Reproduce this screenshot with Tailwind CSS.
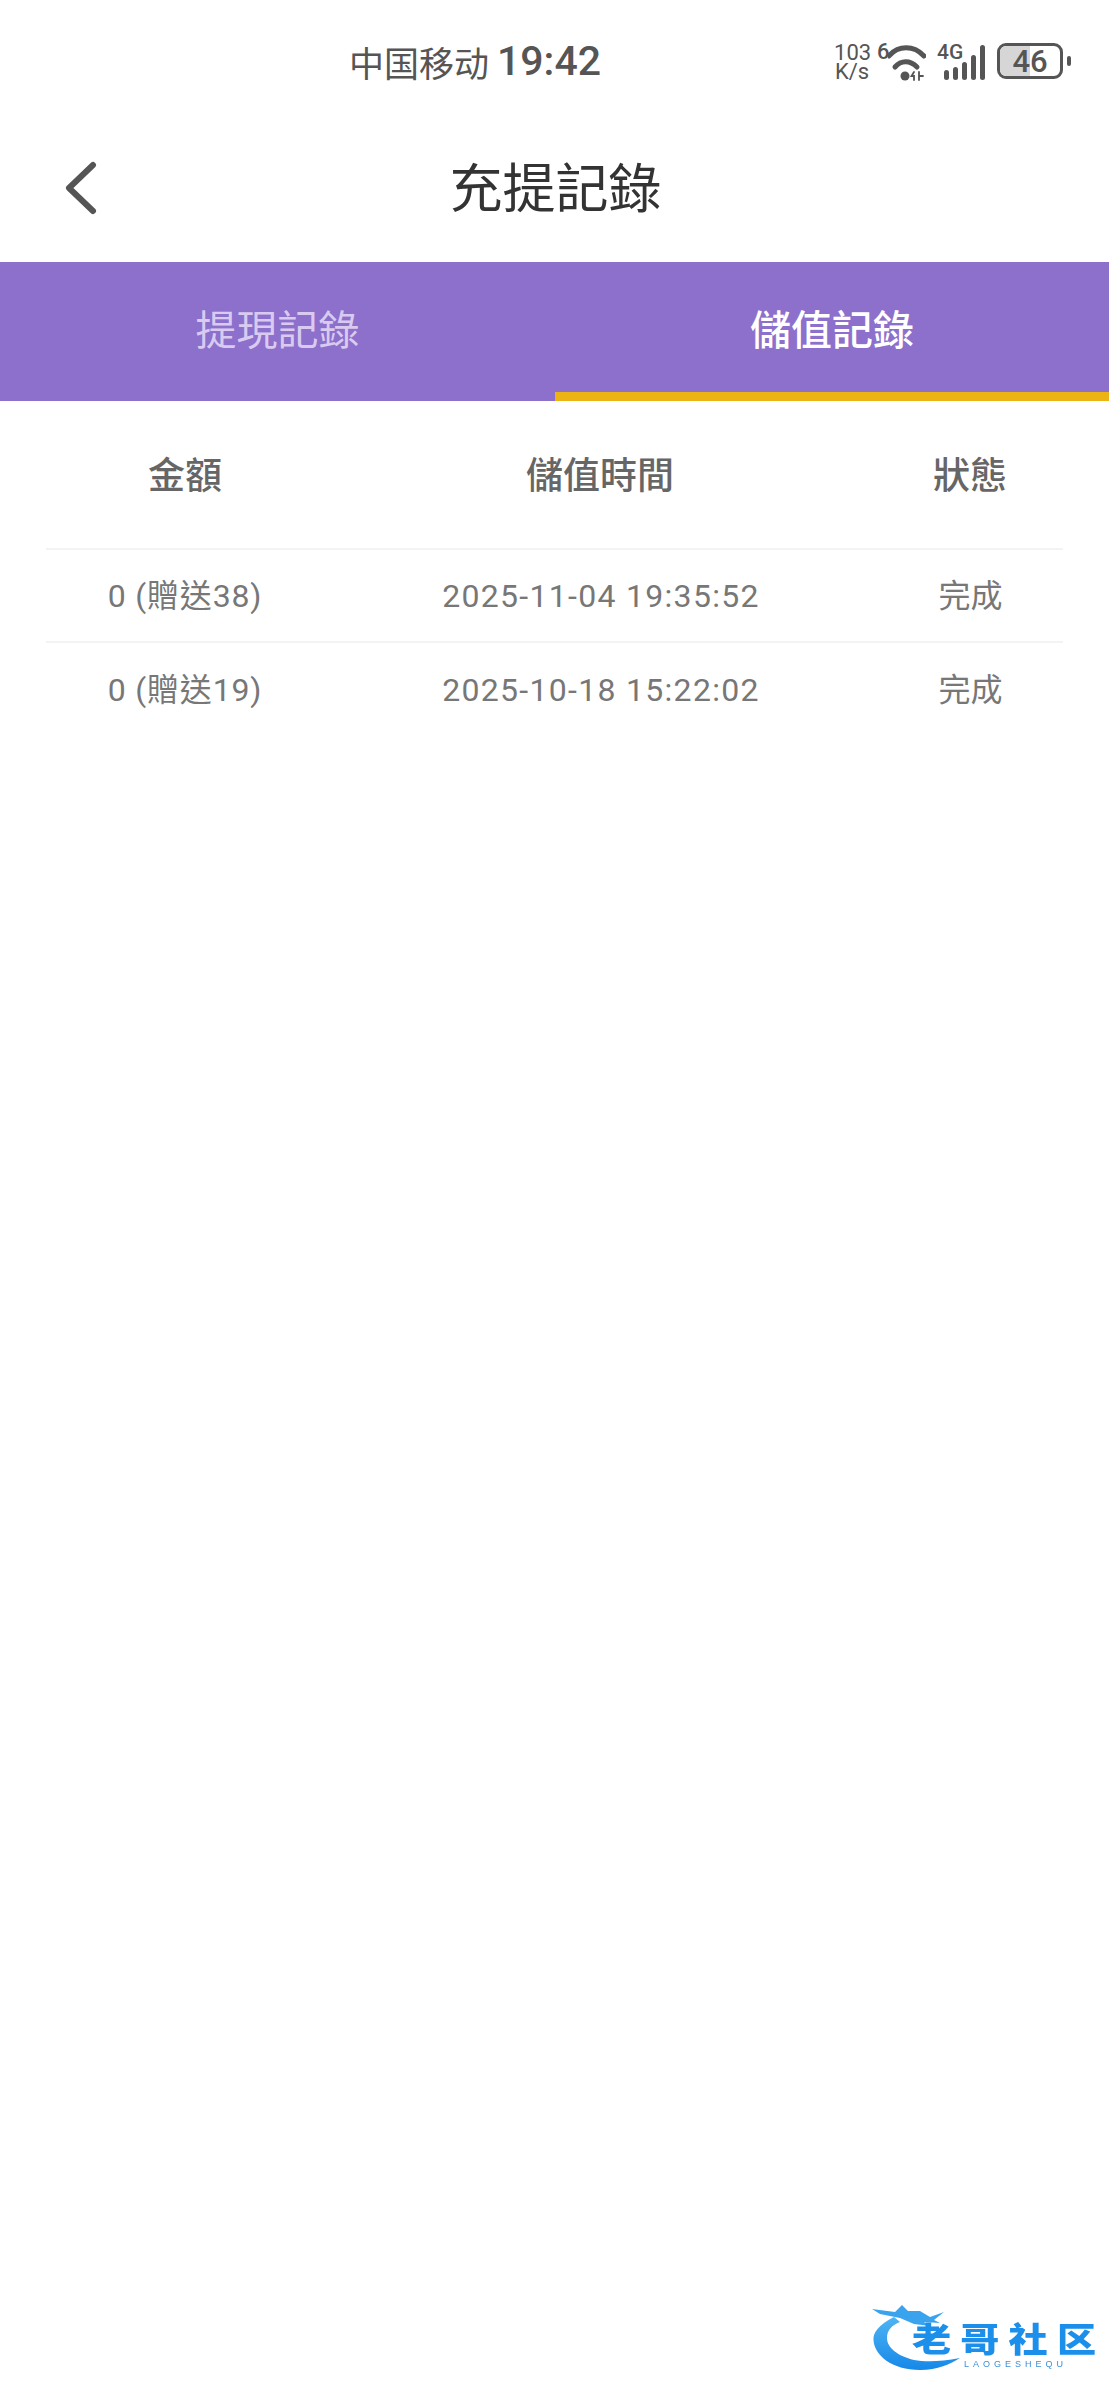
<!DOCTYPE html>
<html lang="zh-Hant">
<head>
  <meta charset="UTF-8" />
  <meta name="viewport" content="width=device-width, initial-scale=1.0" />
  <title>充提記錄</title>
  <script src="https://cdn.jsdelivr.net/npm/@tailwindcss/browser@4"></script>
</head>
<body class="bg-white font-['Noto_Sans_CJK_TC','Noto_Sans',sans-serif]">
  <div class="relative h-[2400px] w-[1109px] overflow-hidden">
    <!-- Status bar -->
    <div class="flex h-[110px] items-start pt-[43px] text-[#555]">
      <div class="ml-[349px] flex h-[36px] items-center gap-[8px]">
        <span class="font-['Noto_Sans_CJK_SC',sans-serif] text-[35px] leading-none">中国移动</span>
        <span class="font-['Roboto',sans-serif] text-[41px] font-medium leading-none">19:42</span>
      </div>
      <div class="ml-[233px] flex items-start">
        <div class="w-[36px] text-center font-['Roboto',sans-serif] text-[22px] leading-[19px]">103<br />K/s</div>
        <span class="ml-[7px] w-[12px] font-['Roboto',sans-serif] text-[22px] font-medium leading-[18px]">6</span>
        <svg class="-ml-px" width="38" height="38" viewBox="13 0 38 38" fill="none" stroke="#555" stroke-linecap="round">
          <path d="M14 13C23 2 39 2 49 13" stroke-width="5" />
          <path d="M20 24C26 17 35 17 42 24" stroke-width="5" />
          <circle cx="30" cy="33" r="4.500" fill="#555" stroke="none" />
          <path d="M39 29L36.500 33H39V37M44 29V37M44 33H48" stroke-width="1.800" />
        </svg>
        <span class="ml-[11px] w-[26px] font-['Roboto',sans-serif] text-[21px] font-medium leading-[19px]">4G</span>
        <svg class="-ml-[21px]" width="46" height="38" viewBox="6 0 46 38" fill="#555">
          <rect x="8" y="27" width="5" height="10" rx="2.500" />
          <rect x="17" y="24" width="5" height="13" rx="2.500" />
          <rect x="26" y="19" width="5" height="18" rx="2.500" />
          <rect x="35" y="12" width="5" height="25" rx="2.500" />
          <rect x="44" y="2" width="5" height="35" rx="2.500" />
        </svg>
        <div class="relative ml-[9px] flex h-[36px] w-[66px] items-center justify-center overflow-hidden rounded-[9px] border-[3px] border-[#555]">
          <div class="absolute inset-y-0 left-0 w-[30px] bg-[#d6d6d6]"></div>
          <span class="relative font-['Roboto',sans-serif] text-[31px] font-medium leading-none">46</span>
        </div>
        <div class="ml-[4px] mt-[13px] h-[10px] w-[4px] rounded-full bg-[#555]"></div>
      </div>
    </div>

    <!-- Title -->
    <div class="relative flex h-[152px] items-center justify-center pb-[2px] pl-[2px]">
      <svg class="absolute left-[64px] top-[51px]" width="33" height="54" viewBox="0 0 33 54" fill="none" stroke="#555" stroke-width="6" stroke-linecap="round" stroke-linejoin="round">
        <path d="M29 4L5 27L29 50" />
      </svg>
      <h1 class="text-[53px] font-normal leading-none text-[#333]">充提記錄</h1>
    </div>

    <!-- Tabs -->
    <div class="grid h-[139px] grid-cols-[555px_554px] bg-[#8d6fcc]">
      <div class="flex items-center justify-center pb-[9px] text-[41px] leading-none text-[#d9cbf0]">提現記錄</div>
      <div class="flex items-center justify-center rounded-t-[4px] border-b-[9px] border-[#ebb314] pt-[1px] text-[41px] font-medium leading-none text-white">儲值記錄</div>
    </div>

    <!-- Records -->
    <div class="mx-[46px]">
      <div class="grid h-[149px] grid-cols-[278px_552px_186px] items-center border-b-2 border-[#f3f3f3] pb-[3px] text-center text-[37px] font-medium leading-none text-[#666]">
        <div>金額</div>
        <div>儲值時間</div>
        <div class="pl-[2px]">狀態</div>
      </div>
      <div class="grid h-[93px] grid-cols-[278px_552px_186px] items-center border-b-2 border-[#f3f3f3] text-center font-['Roboto','Noto_Sans_CJK_SC',sans-serif] text-[32px] leading-none text-[#777]">
        <div class="tracking-[0.8px]">0 (贈送38)</div>
        <div class="pl-[2px] tracking-[1.3px]">2025-11-04 19:35:52</div>
        <div class="pl-[3px]">完成</div>
      </div>
      <div class="grid h-[93px] grid-cols-[278px_552px_186px] items-center text-center font-['Roboto','Noto_Sans_CJK_SC',sans-serif] text-[32px] leading-none text-[#777]">
        <div class="tracking-[0.8px]">0 (贈送19)</div>
        <div class="pl-[2px] tracking-[1.3px]">2025-10-18 15:22:02</div>
        <div class="pl-[3px]">完成</div>
      </div>
    </div>

    <!-- Watermark -->
    <div class="absolute left-[870px] top-[2300px] h-[100px] w-[239px] blur-[0.6px]">
      <svg class="absolute left-0 top-0" width="100" height="80" viewBox="0 0 100 80">
        <defs>
          <linearGradient id="dragon" x1="0" y1="0" x2="0" y2="1">
            <stop offset="0" stop-color="#4fb4f2" />
            <stop offset="1" stop-color="#1688e8" />
          </linearGradient>
        </defs>
        <path d="M24 17C8 25 3 33 3.500 40C4 55 22 70 50 70C68 70 80 64 90 58C70 62 55 62 44 60C28 56 17 48 17 38C17 30 22 25 30 22Z" fill="url(#dragon)" />
        <path d="M2 9L25 12L32 5L38 11L50 11L60 17L74 12L64 20L70 23L54 22L60 26L44 24L30 18L10 14Z" fill="#3aa3ee" />
      </svg>
      <div class="absolute left-[42px] top-[17px] origin-left scale-x-115 whitespace-nowrap font-['Noto_Sans_CJK_SC',sans-serif] text-[34px] font-black leading-[42px] tracking-[8px] text-[#1b8fea]">老哥社区</div>
      <div class="absolute left-[94px] top-[60px] whitespace-nowrap font-['Liberation_Sans',sans-serif] text-[9px] leading-none tracking-[4px] text-[#3b8fd8]">LAOGESHEQU</div>
    </div>
  </div>
</body>
</html>
